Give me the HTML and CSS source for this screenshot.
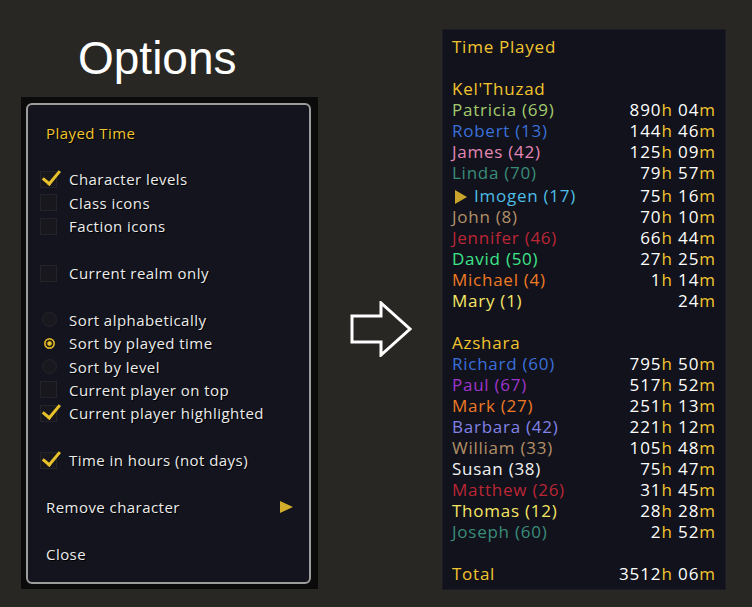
FILE: index.html
```html
<!DOCTYPE html>
<html lang="en">
<head>
  <meta charset="UTF-8" />
  <title>Played Time Options</title>
  <link rel="stylesheet" href="styles.css">
</head>
<body>
  <div class="left">
    <h1 class="big-title">Options</h1>
    <div class="frame">
      <div class="menu">
        <div class="row label gold">Played Time</div>
        <div class="row"></div>
        <div class="row"><span class="box checked"></span>Character levels</div>
        <div class="row"><span class="box"></span>Class icons</div>
        <div class="row"><span class="box"></span>Faction icons</div>
        <div class="row"></div>
        <div class="row"><span class="box"></span>Current realm only</div>
        <div class="row"></div>
        <div class="row"><span class="radio"></span>Sort alphabetically</div>
        <div class="row"><span class="radio on"></span>Sort by played time</div>
        <div class="row"><span class="radio"></span>Sort by level</div>
        <div class="row"><span class="box"></span>Current player on top</div>
        <div class="row"><span class="box checked"></span>Current player highlighted</div>
        <div class="row"></div>
        <div class="row"><span class="box checked"></span>Time in hours (not days)</div>
        <div class="row"></div>
        <div class="row label sub">Remove character<span class="tri"></span></div>
        <div class="row"></div>
        <div class="row label">Close</div>
      </div>
    </div>
  </div>

  <svg class="arrow" width="64" height="56" viewBox="0 0 64 56">
    <path d="M2 15 H31 V2 L60 28 L31 54 V41 H2 Z" fill="none" stroke="#fff" stroke-width="3" stroke-linejoin="miter"/>
  </svg>

  <div class="tooltip" id="tooltip"></div>

  <script>
    // realm -> characters, [name, level, colour class, hours, minutes]
    const realms = [
      { name: "Kel'Thuzad", chars: [
        ['Patricia', 69, 'hunter', 890, 4],
        ['Robert', 13, 'shaman', 144, 46],
        ['James', 42, 'paladin', 125, 9],
        ['Linda', 70, 'evoker', 79, 57],
        ['Imogen', 17, 'mage', 75, 16, true],
        ['John', 8, 'warrior', 70, 10],
        ['Jennifer', 46, 'dk', 66, 44],
        ['David', 50, 'monk', 27, 25],
        ['Michael', 4, 'druid', 1, 14],
        ['Mary', 1, 'rogue', 0, 24],
      ]},
      { name: 'Azshara', chars: [
        ['Richard', 60, 'shaman', 795, 50],
        ['Paul', 67, 'dh', 517, 52],
        ['Mark', 27, 'druid', 251, 13],
        ['Barbara', 42, 'warlock', 221, 12],
        ['William', 33, 'warrior', 105, 48],
        ['Susan', 38, 'priest', 75, 47],
        ['Matthew', 26, 'dk', 31, 45],
        ['Thomas', 12, 'rogue', 28, 28],
        ['Joseph', 60, 'evoker', 2, 52],
      ]},
    ];

    function fmt(h, m) {
      const mm = String(m).padStart(2, '0');
      if (h === 0) return `${mm}<span class="u">m</span>`;
      return `${h}<span class="u">h</span> ${mm}<span class="u">m</span>`;
    }

    const tip = document.getElementById('tooltip');
    let html = '<div class="line gold">Time Played</div><div class="line"></div>';

    realms.forEach((realm) => {
      html += `<div class="line gold">${realm.name}</div>`;
      realm.chars.forEach(c => {
        const mark = c[5] ? '<span class="cur"></span>' : '';
        html += `<div class="line${c[5] ? ' me' : ''}">
          <span class="${c[2]}">${mark}${c[0]} (${c[1]})</span>
          <span class="time">${fmt(c[3], c[4])}</span>
        </div>`;
      });
      html += '<div class="line"></div>';
    });

    // total as reported by the game (includes seconds rounding)
    html += `<div class="line"><span class="gold">Total</span><span class="time">${fmt(3512, 6)}</span></div>`;
    tip.innerHTML = html;
  </script>
</body>
</html>
```

FILE: styles.css
```css
body {
  margin: 0;
  background-color: #292724;
  display: flex;
  align-items: flex-start;
  padding-left: 21px;
  height: 607px;
  overflow: hidden;
  font-family: 'Open Sans', sans-serif;
}

.left {
  width: 297px;
}

.big-title {
  margin: 0 0 16px 57px;
  padding-top: 35px;
  font-family: 'Liberation Sans', Arial, sans-serif;
  font-weight: normal;
  font-size: 46px;
  line-height: 46px;
  color: #fff;
}

.frame {
  background-color: #0b0b0b;
  padding: 6px 7px 5px 5px;
  height: 481px;
}

.menu {
  height: 100%;
  box-sizing: border-box;
  border: 2px solid #9c9c9c;
  border-radius: 6px;
  background-color: #13141d;
  padding: 16px 12px 0 12px;
}

.row {
  height: 23.4px;
  display: flex;
  align-items: center;
  font-size: 15px;
  letter-spacing: 0.45px;
  color: #ececec;
  text-shadow: 1px 1px 0 #000;
}

.row.label {
  padding-left: 6px;
}

.gold {
  color: #f2c530;
}

.box {
  width: 17px;
  height: 17px;
  box-sizing: border-box;
  margin-right: 12px;
  background-color: #17171d;
  border: 1px solid #23232a;
  position: relative;
}

.box.checked::after {
  content: '';
  position: absolute;
  left: 4px;
  top: -5px;
  width: 7px;
  height: 15px;
  border-right: 3px solid #e9c12a;
  border-bottom: 3px solid #e9c12a;
  transform: rotate(40deg);
  transform-origin: 60% 60%;
}

.radio {
  width: 15px;
  height: 15px;
  box-sizing: border-box;
  margin: 0 12px 0 2px;
  border-radius: 50%;
  background-color: #18181e;
  border: 1px solid #24242b;
}

.radio.on {
  border: 2px solid #13141d;
  background: radial-gradient(circle, #e6bf2c 0 1.8px, #2a2410 2.6px 3.6px, #d9b22a 4.2px 5.6px, #13141d 6px);
}

.row.sub {
  justify-content: space-between;
  padding-right: 4px;
}

.tri {
  width: 0;
  height: 0;
  border-top: 6px solid transparent;
  border-bottom: 6px solid transparent;
  border-left: 13px solid #d0ae2c;
}

.arrow {
  margin: 301px 0 0 32px;
}

.tooltip {
  margin: 29px 0 0 28px;
  width: 284px;
  height: 561px;
  box-sizing: border-box;
  padding: 7px 10px;
  background-color: #11121b;
  box-shadow: inset 0 0 0 1px #1b1c24;
}

.line {
  height: 21px;
  line-height: 21px;
  display: flex;
  justify-content: space-between;
  font-size: 17px;
  letter-spacing: 0.75px;
  white-space: nowrap;
}

.line.me {
  height: 23px;
  line-height: 23px;
  margin-top: 1px;
  margin-bottom: -1px;
}

.time {
  color: #fff;
  letter-spacing: 0.9px;
}

.u {
  color: #f2c530;
}

.cur {
  display: inline-block;
  width: 0;
  height: 0;
  margin: 0 7px 0 3px;
  border-top: 7px solid transparent;
  border-bottom: 7px solid transparent;
  border-left: 12px solid #c9a52c;
  vertical-align: -2px;
}

.hunter { color: #a3cb6d; }
.shaman { color: #3b70d9; }
.paladin { color: #e487b6; }
.evoker { color: #3a8d7a; }
.mage { color: #4fbde5; }
.warrior { color: #b39068; }
.dk { color: #bb2636; }
.monk { color: #3ee58a; }
.druid { color: #ee7a25; }
.rogue { color: #f5e666; }
.dh { color: #9f36cc; }
.warlock { color: #8282e6; }
.priest { color: #f2f2f2; }
```
